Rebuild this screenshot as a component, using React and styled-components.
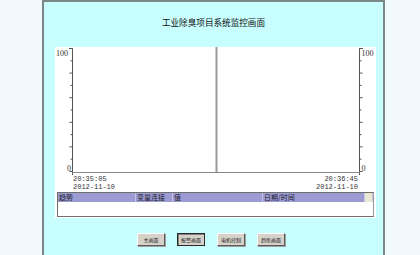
import styled, { createGlobalStyle } from "styled-components";

const GlobalStyle = createGlobalStyle`
  html, body {
    margin: 0;
    padding: 0;
    background: #f1f9fd;
    font-family: "Liberation Sans", "Noto Sans CJK SC", sans-serif;
  }
`;

const Page = styled.div`
  display: flex;
  padding-left: 42px;
  height: 255px;
  overflow: hidden;
`;

const Panel = styled.div`
  width: 343px;
  box-sizing: border-box;
  min-height: 270px;
  background: #c8fefe;
  border: 2px solid #7b8888;
  border-bottom: none;
  display: flex;
  flex-direction: column;
`;

const Title = styled.div`
  height: 45px;
  box-sizing: border-box;
  padding-top: 14px;
  line-height: 12px;
  text-align: center;
  font-size: 8.6px;
  font-family: "Noto Sans CJK SC", sans-serif;
  color: #111;
`;

const ChartBox = styled.div`
  margin-left: 11px;
  width: 321px;
  height: 171px;
  background: #fff;
  display: flex;
  flex-direction: column;
`;

const TimeRow = styled.div`
  display: flex;
  justify-content: space-between;
  padding: 0 18px 0 18px;
  height: 16px;
  font-family: "Liberation Mono", monospace;
  font-size: 7px;
  line-height: 8px;
  color: #333;
`;

const TimeStamp = styled.div`
  text-align: ${({ $right }) => ($right ? "right" : "left")};
`;

const Table = styled.div`
  margin: 1px 2px 0;
  height: 25px;
  box-sizing: border-box;
  border: 1px solid #6f6f6f;
  border-right-color: #9a9a9a;
  display: flex;
  flex-direction: column;
`;

const HeaderRow = styled.div`
  display: grid;
  grid-template-columns: 78px 37px 90px 102px 1fr;
  height: 9px;
  background: #9c9cd2;
`;

const HeaderCell = styled.div`
  font-family: "Noto Sans CJK SC", sans-serif;
  font-size: 7px;
  line-height: 9px;
  color: #1a1a2a;
  padding-left: 1px;
  border-right: 1px solid #c4c4e6;
  white-space: nowrap;
  background: ${({ $corner }) => ($corner ? "#ece8d6" : "transparent")};
`;

const TableBody = styled.div`
  flex: 1;
  background: #fff;
`;

const ButtonRow = styled.div`
  display: flex;
  gap: 12px;
  margin-top: 15px;
  padding-left: 93px;
`;

const NavButton = styled.div`
  width: 28px;
  height: 13px;
  box-sizing: border-box;
  background: #d6d2ca;
  border: 1px solid;
  border-color: ${({ $active }) =>
    $active ? "#2a2a2a" : "#ffffff #5a5a5a #5a5a5a #ffffff"};
  box-shadow: ${({ $active }) =>
    $active ? "inset 1px 1px 0 #808080" : "1px 1px 0 #a0a0a0"};
  display: flex;
  align-items: center;
  justify-content: center;
  font-family: "Noto Sans CJK SC", sans-serif;
  font-size: 5px;
  color: #222;
  white-space: nowrap;
`;

const ticks = Array.from({ length: 11 }, (_, i) => 1.5 + i * 12.3);

function TrendChart() {
  return (
    <svg width="321" height="128" viewBox="0 0 321 128">
      <g fill="none" stroke="#555" strokeWidth="1">
        <path d="M17.5 1.5V128M14 1.5H17.5" />
        <path d="M304.5 1.5V128M308 1.5H304.5" />
        {ticks.map((y, i) => (
          <g key={i}>
            <path d={`M${i % 2 ? 15.5 : 14.5} ${y}H17.5`} />
            <path d={`M304.5 ${y}H${i % 2 ? 306.5 : 307.5}`} />
          </g>
        ))}
      </g>
      <path d="M17 125.5H305" stroke="#888" strokeWidth="1" />
      <rect x="160.5" y="0" width="2" height="125" fill="#9a9a9a" />
      <g fontFamily="Liberation Serif, serif" fontSize="8" fill="#333">
        <text x="1" y="9">100</text>
        <text x="12" y="124">0</text>
        <text x="306.5" y="9">100</text>
        <text x="306.5" y="124">0</text>
      </g>
    </svg>
  );
}

const columns = ["趋势", "变量连接", "值", "日期/时间"];
const buttons = ["主画面", "报警画面", "电机控制", "趋势画面"];

export default function App() {
  return (
    <>
      <GlobalStyle />
      <Page>
        <Panel>
          <Title>工业除臭项目系统监控画面</Title>
          <ChartBox>
            <TrendChart />
            <TimeRow>
              <TimeStamp>
                20:35:05
                <br />
                2012-11-10
              </TimeStamp>
              <TimeStamp $right>
                20:36:45
                <br />
                2012-11-10
              </TimeStamp>
            </TimeRow>
            <Table>
              <HeaderRow>
                {columns.map((c) => (
                  <HeaderCell key={c}>{c}</HeaderCell>
                ))}
                <HeaderCell $corner />
              </HeaderRow>
              <TableBody />
            </Table>
          </ChartBox>
          <ButtonRow>
            {buttons.map((b, i) => (
              <NavButton key={b} $active={i === 1}>
                {b}
              </NavButton>
            ))}
          </ButtonRow>
        </Panel>
      </Page>
    </>
  );
}
